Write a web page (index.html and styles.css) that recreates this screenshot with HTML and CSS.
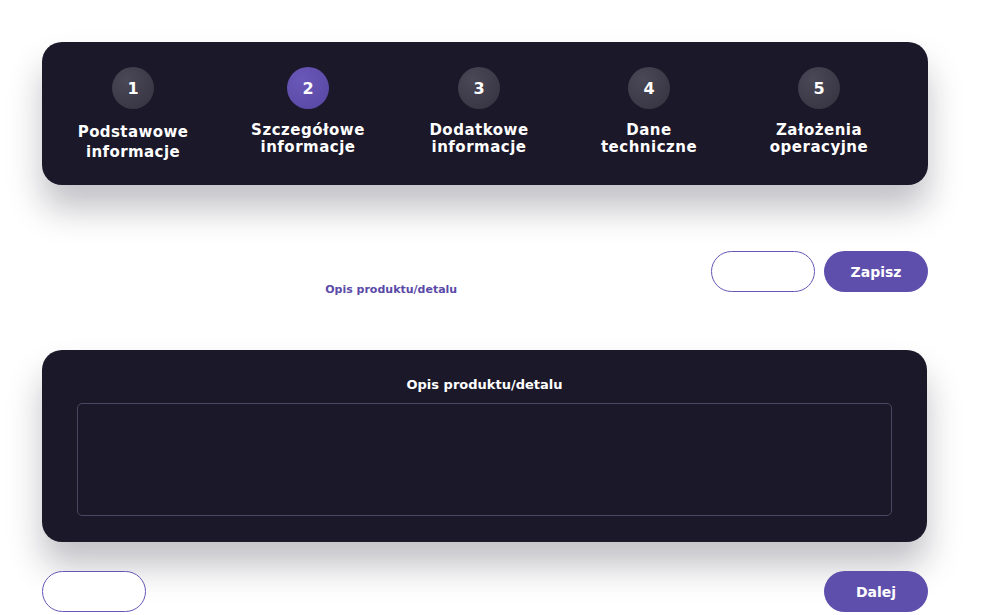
FILE: index.html
```html
<!DOCTYPE html>
<html>

<head>
  <meta charset="UTF-8">
  <title>Szczegółowe informacje</title>
  <link rel="stylesheet" href="styles.css">
</head>

<body>
  <div class="page">
    <div class="stepper">
      <div class="step step-first">
        <span class="step-number">1</span>
        <span class="step-label">Podstawowe informacje</span>
      </div>
      <div class="step">
        <span class="step-number active">2</span>
        <span class="step-label">Szczegółowe informacje</span>
      </div>
      <div class="step">
        <span class="step-number">3</span>
        <span class="step-label">Dodatkowe informacje</span>
      </div>
      <div class="step">
        <span class="step-number">4</span>
        <span class="step-label">Dane techniczne</span>
      </div>
      <div class="step">
        <span class="step-number">5</span>
        <span class="step-label">Założenia operacyjne</span>
      </div>
    </div>

    <div class="toolbar">
      <div class="toolbar-left">
        <h2 class="ghost-title">Szczegółowe informacje o produkcie</h2>
        <div class="tabs">
          <span class="tab">Dane ogólne</span>
          <span class="tab">Wymiary i materiały</span>
          <span class="tab tab-active">Opis produktu/detalu</span>
          <span class="tab">Załączniki i zdjęcia</span>
        </div>
      </div>
      <div class="toolbar-buttons">
        <button class="btn btn-outline">Anuluj</button>
        <button class="btn btn-primary">Zapisz</button>
      </div>
    </div>

    <div class="panel">
      <label class="panel-title" for="opis">Opis produktu/detalu</label>
      <textarea id="opis" class="panel-textarea"></textarea>
    </div>

    <div class="footer">
      <button class="btn btn-outline">Wstecz</button>
      <button class="btn btn-primary">Dalej</button>
    </div>
  </div>
</body>
</html>
```

FILE: styles.css
```css
body {
  margin: 0;
  background-color: #ffffff;
  font-family: "DejaVu Sans", "Noto Sans", sans-serif;
}

.page {
  width: 886px;
  padding: 42px 0 0 42px;
}

.stepper {
  display: grid;
  grid-template-columns: 178px 172px 170px 170px 170px;
  padding: 25px 0 0 2px;
  height: 118px;
  background-color: #1b1829;
  border-radius: 20px;
  box-shadow: 0 24px 34px rgba(20, 18, 40, 0.26);
}

.step {
  display: flex;
  flex-direction: column;
  align-items: center;
  gap: 13px;
}

.step-number {
  display: flex;
  justify-content: center;
  align-items: center;
  width: 42px;
  height: 42px;
  border-radius: 50%;
  background: radial-gradient(circle at 35% 30%, #4a4856, #34323f);
  color: #ffffff;
  font-weight: bold;
  font-size: 16px;
}

.step-number.active {
  background: radial-gradient(circle at 35% 30%, #6a58b8, #5646a2);
}

.step-label {
  width: 125px;
  text-align: center;
  color: #ffffff;
  font-weight: bold;
  font-size: 15px;
  line-height: 17px;
  letter-spacing: 0.5px;
}

.step-first .step-label {
  line-height: 20px;
  letter-spacing: 0.4px;
}

.toolbar {
  display: flex;
  justify-content: space-between;
  align-items: flex-start;
  margin-top: 62px;
}

.ghost-title {
  margin: 0;
  color: #ffffff;
  font-size: 20px;
}

.tabs {
  display: flex;
  gap: 30px;
  margin-top: 12px;
  font-size: 11px;
  font-weight: bold;
}

.tab {
  color: #ffffff;
}

.tab-active {
  margin-left: 20px;
  color: #5b4aa8;
}

.toolbar-buttons {
  display: flex;
  gap: 9px;
  margin-top: 4px;
}

.btn {
  width: 104px;
  height: 41px;
  border-radius: 21px;
  font-family: "DejaVu Sans", sans-serif;
  font-size: 14px;
  font-weight: bold;
  color: #ffffff;
}

.btn-outline {
  background-color: #ffffff;
  border: 1px solid #6656b6;
}

.btn-primary {
  background-color: #5f4fad;
  border: none;
}

.panel {
  display: flex;
  flex-direction: column;
  align-items: center;
  gap: 10px;
  margin: 54px 1px 0 0;
  padding: 27px 35px 26px;
  background-color: #1b1829;
  border-radius: 20px;
  box-shadow: 0 24px 34px rgba(20, 18, 40, 0.26);
}

.panel-title {
  color: #ffffff;
  font-size: 13px;
  font-weight: bold;
  line-height: 16px;
}

.panel-textarea {
  box-sizing: border-box;
  width: 100%;
  height: 113px;
  background-color: #1b1829;
  border: 1px solid #4b4760;
  border-radius: 5px;
  resize: none;
}

.footer {
  display: flex;
  justify-content: space-between;
  margin-top: 29px;
}
```
